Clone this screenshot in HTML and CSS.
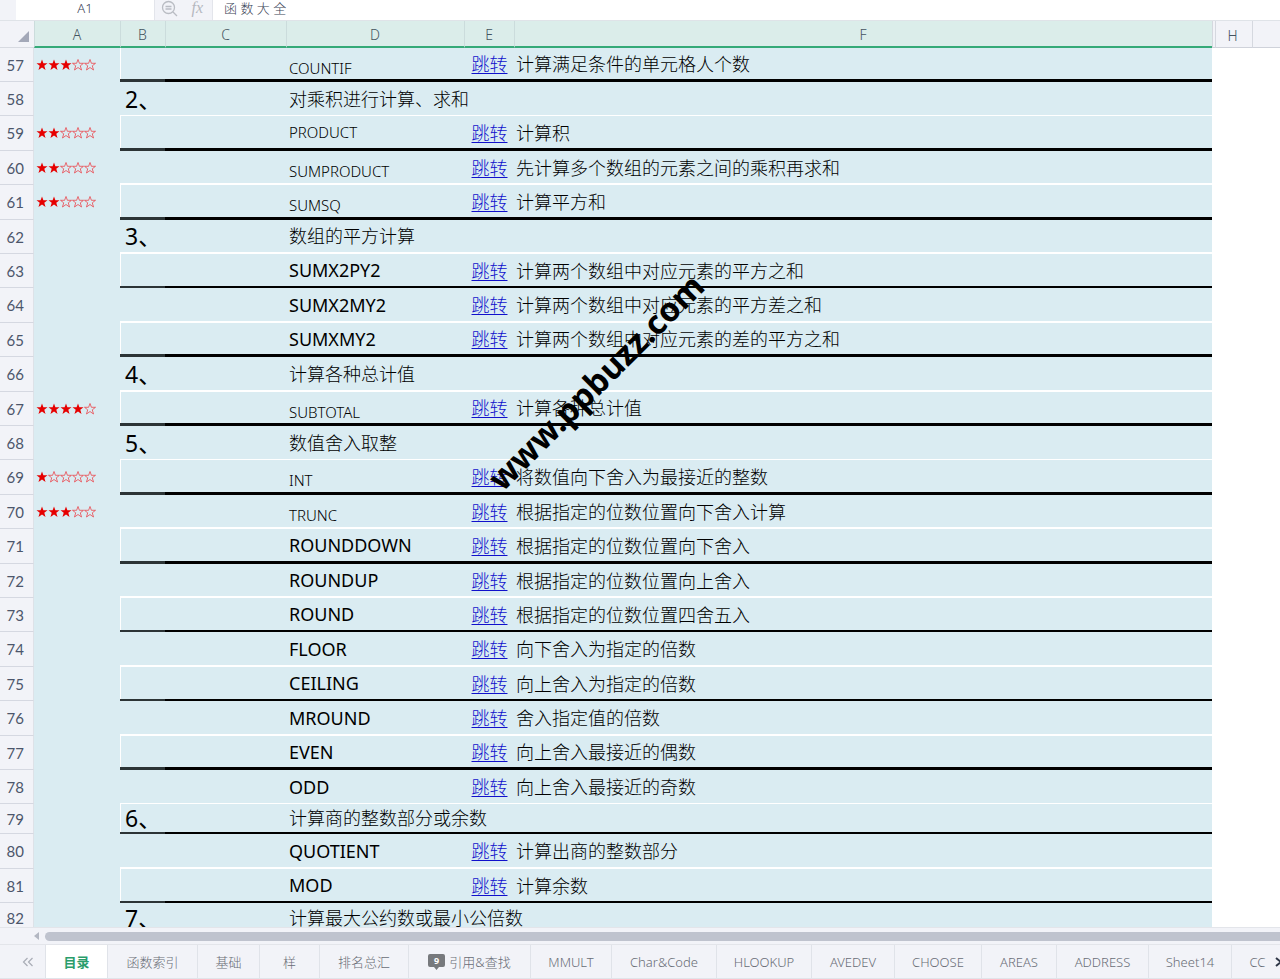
FILE: index.html
```html
<!DOCTYPE html>
<html lang="zh-CN">
<head>
<meta charset="utf-8">
<title>函数大全</title>
<link rel="stylesheet" href="styles.css">
</head>
<body>
<div class="app">
  <header class="formula-bar">
    <input class="name-box" aria-label="名称框" value="A1">
    <div class="tools">
      <button class="tool" aria-label="查找"><svg width="17" height="17" viewBox="0 0 17 17" fill="none" stroke="#b9bcc3" stroke-width="1.3"><circle cx="7.500" cy="7.500" r="6"/><path d="M12 12l4 4M4.500 6.500h6M4.500 9h6" /></svg></button>
      <button class="tool fx" aria-label="插入函数">fx</button>
    </div>
    <input class="formula" aria-label="编辑栏" value="函 数 大 全">
  </header>
  <main class="sheet">
    <table class="grid">
      <colgroup><col class="c-num"><col class="c-a"><col class="c-b"><col class="c-c"><col class="c-d"><col class="c-e"><col class="c-f"><col class="c-g"><col class="c-h"><col class="c-i"></colgroup>
      <thead><tr><th class="corner"><svg width="12" height="12" viewBox="0 0 12 12"><path d="M11 0v11H0z" fill="#a3a8b8"/></svg></th><th>A</th><th>B</th><th>C</th><th>D</th><th>E</th><th>F</th><th class="off"></th><th class="off">H</th><th class="off"></th></tr></thead>
      <tbody id="rows"></tbody>
    </table>
    <div class="watermark">www.ppbuzz.com</div>
  </main>
  <div class="scroll"><svg width="6" height="8" viewBox="0 0 6 8"><path d="M5 0v8L0 4z" fill="#b3b7c2"/></svg><div class="thumb"></div></div>
  <nav class="tabs" id="tabs"><button class="prev" aria-label="上一页"><svg width="12" height="10" viewBox="0 0 12 10" fill="none" stroke="#a9adb6" stroke-width="1.2"><path d="M5.500 1l-4 4 4 4M10.500 1l-4 4 4 4"/></svg></button></nav>
</div>
<script src="sheet.js"></script>
</body>
</html>
```
FILE: sheet.js
```js
// [row, stars, section, name, description, name style, row height class, line class]
const rows = [
  [57, 3, "", "COUNTIF", "计算满足条件的单元格人个数", "small", "", "k3"],
  [58, 0, "2、", "对乘积进行计算、求和", "", "", "", "w1"],
  [59, 2, "", "PRODUCT", "计算积", "mid", "tall", "k3"],
  [60, 2, "", "SUMPRODUCT", "先计算多个数组的元素之间的乘积再求和", "small", "", "w2"],
  [61, 2, "", "SUMSQ", "计算平方和", "small", "tall", "k3"],
  [62, 0, "3、", "数组的平方计算", "", "", "", "w2"],
  [63, 0, "", "SUMX2PY2", "计算两个数组中对应元素的平方之和", "latin", "", "k2"],
  [64, 0, "", "SUMX2MY2", "计算两个数组中对应元素的平方差之和", "latin", "tall", "w2"],
  [65, 0, "", "SUMXMY2", "计算两个数组中对应元素的差的平方之和", "latin", "", "k3"],
  [66, 0, "4、", "计算各种总计值", "", "", "tall", "w2"],
  [67, 4, "", "SUBTOTAL", "计算各种总计值", "small", "", "k3"],
  [68, 0, "5、", "数值舍入取整", "", "", "", "w1"],
  [69, 1, "", "INT", "将数值向下舍入为最接近的整数", "small", "tall", "k3"],
  [70, 3, "", "TRUNC", "根据指定的位数位置向下舍入计算", "small", "", "w2"],
  [71, 0, "", "ROUNDDOWN", "根据指定的位数位置向下舍入", "latin", "tall", "k3"],
  [72, 0, "", "ROUNDUP", "根据指定的位数位置向上舍入", "latin", "", "w2"],
  [73, 0, "", "ROUND", "根据指定的位数位置四舍五入", "latin", "", "k2"],
  [74, 0, "", "FLOOR", "向下舍入为指定的倍数", "latin", "tall", "w2"],
  [75, 0, "", "CEILING", "向上舍入为指定的倍数", "latin", "", "k2"],
  [76, 0, "", "MROUND", "舍入指定值的倍数", "latin", "tall", "w2"],
  [77, 0, "", "EVEN", "向上舍入最接近的偶数", "latin", "", "k3"],
  [78, 0, "", "ODD", "向上舍入最接近的奇数", "latin", "", "w1"],
  [79, 0, "6、", "计算商的整数部分或余数", "", "", "short", "k2"],
  [80, 0, "", "QUOTIENT", "计算出商的整数部分", "latin", "tall", "w2"],
  [81, 0, "", "MOD", "计算余数", "latin", "", "k2"],
  [82, 0, "7、", "计算最大公约数或最小公倍数", "", "", "short", ""]
];

const star = solid => `<svg width="12" height="12" viewBox="0 0 12 12"><path class="${solid ? "solid" : "hollow"}" d="M6 0.500L7.400 4.300H11.500L8.300 6.800 9.500 11 6 8.500 2.500 11 3.700 6.800 0.500 4.300H4.600z"/></svg>`;

document.getElementById("rows").innerHTML = rows.map(([n, s, sec, name, desc, style, height, line]) => `
  <tr class="${height} ${line}">
    <th scope="row">${n}</th>
    <td class="rating">${s ? `<div class="stars" role="img" aria-label="${s}/5">${[1, 2, 3, 4, 5].map(i => star(i <= s)).join("")}</div>` : ""}</td>
    <td class="section">${sec}</td><td class="ruled"></td>
    <td class="ruled name ${style}">${name}</td>
    <td class="ruled jump">${desc ? `<a href="#${name}">跳转</a>` : ""}</td>
    <td class="ruled desc">${desc}</td><td class="blank"></td><td class="blank"></td><td class="blank"></td>
  </tr>`).join("");

const tabs = [["目录", 62], ["函数索引", 90], ["基础", 62], ["样", 60], ["排名总汇", 89], ["引用&amp;查找", 122], ["MMULT", 81], ["Char&amp;Code", 105], ["HLOOKUP", 95], ["AVEDEV", 83], ["CHOOSE", 87], ["AREAS", 75], ["ADDRESS", 92], ["Sheet14", 83], ["CC", 52]];
const badge = `<svg width="17" height="17" viewBox="0 0 17 17"><path d="M2 1h13q2 0 2 2v9q0 2-2 2h-4l-2.500 3L6 14H2q-2 0-2-2V3q0-2 2-2z" fill="#77797d"/><text x="8.500" y="11" text-anchor="middle" class="badge-text">9</text></svg>`;
document.getElementById("tabs").insertAdjacentHTML("beforeend", tabs.map(([t, w], i) =>
  `<button class="tab${i === 0 ? " active" : ""}" style="width:${w}px">${i === 5 ? badge : ""}<span>${t}</span></button>`).join("") +
  `<button class="next" aria-label="下一页"><svg width="8" height="12" viewBox="0 0 8 12" fill="none" stroke="#2f3747" stroke-width="2"><path d="M1 2l5 4-5 4"/></svg></button>`);
```
FILE: styles.css
```css
* { box-sizing: border-box; }
body { margin: 0; background: #fff; font-family: "Noto Sans", "Noto Sans CJK SC", sans-serif; }
button { border: 0; padding: 0; background: none; font: inherit; }
input { border: 0; padding: 0; outline: 0; min-width: 0; background: #fff; color: #3a4356; font: 300 13px "Noto Sans", "Noto Sans CJK SC", sans-serif; }
.app { display: flex; flex-direction: column; height: 100vh; overflow: hidden; }

.formula-bar { display: flex; flex: none; height: 21px; padding-left: 16px; background: #f2f3f8; border-bottom: 1px solid #dfe3e8; }
.name-box { width: 139px; padding-bottom: 4px; text-align: center; border-right: 1px solid #e3e5eb; }
.tools { display: flex; width: 57px; padding: 0 9px 4px 6px; justify-content: space-between; align-items: center; }
.tool { display: flex; }
.fx { color: #b5b8bf; font: italic 16px/20px "Liberation Serif", serif; }
.formula { flex: 1; padding: 0 11px 5px; border-left: 1px solid #e3e5eb; }

.sheet { position: relative; flex: 1; min-height: 0; overflow: hidden; border-bottom: 1px solid #e3e5ea; }
.grid { width: 100%; table-layout: fixed; border-collapse: separate; border-spacing: 0; }
.c-num { width: 34px; }
.c-a { width: 86px; }
.c-b { width: 45px; }
.c-c { width: 121px; }
.c-d { width: 178px; }
.c-e { width: 50px; }
.c-g { width: 3px; }
.c-h { width: 37px; }
.c-i { width: 28px; }
.grid th, .grid td { padding: 0; white-space: nowrap; }
thead th { height: 27px; background: #dbedea; border-bottom: 2px solid #35aa78; border-left: 1px solid #cbdcdc; color: #44545f; font: 300 14px/22px "Noto Sans", sans-serif; }
.grid thead th { padding: 3px 1px 0 0; }
.grid thead .off { background: #f2f3f8; border-bottom: 1px solid #cfd2da; border-left-color: #d5d8df; padding-right: 3px; }
.grid thead .corner { background: #f2f3f8; border-bottom: 1px solid #d7dae1; border-left: 0; text-align: right; vertical-align: bottom; line-height: 0; padding: 0 4px 4px 0; }

tbody tr { height: 34px; --line: 1px solid transparent; --dark: 1px solid transparent; }
tbody .tall { height: 35px; }
tbody .short { height: 30px; }
tbody th { background: #f2f3f8; border-bottom: 1px solid #d5d8e1; border-right: 1px solid #dde2e8; color: #4c566b; font: 400 15px/20px Lato, sans-serif; text-align: right; }
tbody .w1 { --line: 1px solid #fff; --dark: 1px solid #fff; }
tbody .w2 { --line: 2px solid #fff; --dark: 2px solid #fff; }
tbody .k2 { --line: 2px solid #000; --dark: 2px solid #2c3436; }
tbody .k3 { --line: 3px solid #000; --dark: 3px solid #2c3436; }
.grid tbody th { padding-right: 9px; }
.grid tbody td { background: #daecf2; color: #000; font-size: 18px; font-weight: 300; line-height: 24px; }
.grid tbody .blank { background: #fff; }
.grid tbody .ruled { border-bottom: var(--line); }
.grid tbody .section { border-bottom: var(--dark); font-size: 23px; font-weight: 400; line-height: 24px; padding-left: 5px; }
.grid tbody .k2 .section, .grid tbody .k3 .section { box-shadow: inset 1px 0 #fff; }
.grid tbody .name { padding-left: 3px; }
.grid tbody .latin { font-weight: 400; }
.grid tbody .mid { font-size: 15px; }
.grid tbody .small { font-size: 15px; line-height: 20px; padding-top: 8px; }
.grid tbody .jump { padding: 1px 0 0 1px; text-align: center; }
.jump a { color: #1010cc; text-decoration: underline; text-decoration-thickness: 1px; text-underline-offset: 2px; }
.grid tbody .desc { padding: 1px 0 0 2px; }
.stars { display: flex; padding: 0 0 1px 2px; }
.solid { fill: #e60000; stroke: none; }
.hollow { fill: none; stroke: #ec3038; stroke-width: 0.7; }
.watermark { position: absolute; left: 596px; top: 361px; transform: translate(-50%, -50%) rotate(-45deg); font: 700 33px/40px "Noto Sans", sans-serif; color: #000; white-space: nowrap; pointer-events: none; }

.scroll { display: flex; flex: none; height: 17px; align-items: center; padding-left: 34px; gap: 5px; background: #f2f3f8; border-bottom: 1px solid #e3e5ea; }
.thumb { flex: 1; height: 9px; background: #bfc3ce; border-radius: 5px 0 0 5px; }
.tabs { position: relative; display: flex; flex: none; height: 34px; background: #f2f3f8; border-bottom: 1px solid #e1e4ea; overflow: hidden; }
.prev { display: flex; flex: none; width: 46px; padding-left: 10px; align-items: center; justify-content: center; border-right: 1px solid #e0e3e9; }
.tab { display: flex; flex: none; align-items: center; justify-content: center; gap: 4px; border-right: 1px solid #e0e3e9; color: #696d76; font-size: 13px; font-weight: 300; }
.tab.active { background: #fff; color: #2a9d6b; font-weight: 700; }
.badge-text { font: 700 9px "Noto Sans", sans-serif; fill: #fff; }
.next { position: absolute; right: 0; top: 0; display: flex; align-items: center; width: 14px; height: 33px; padding-left: 9px; background: #f2f3f8; overflow: hidden; }
.next svg { flex: none; }
```
